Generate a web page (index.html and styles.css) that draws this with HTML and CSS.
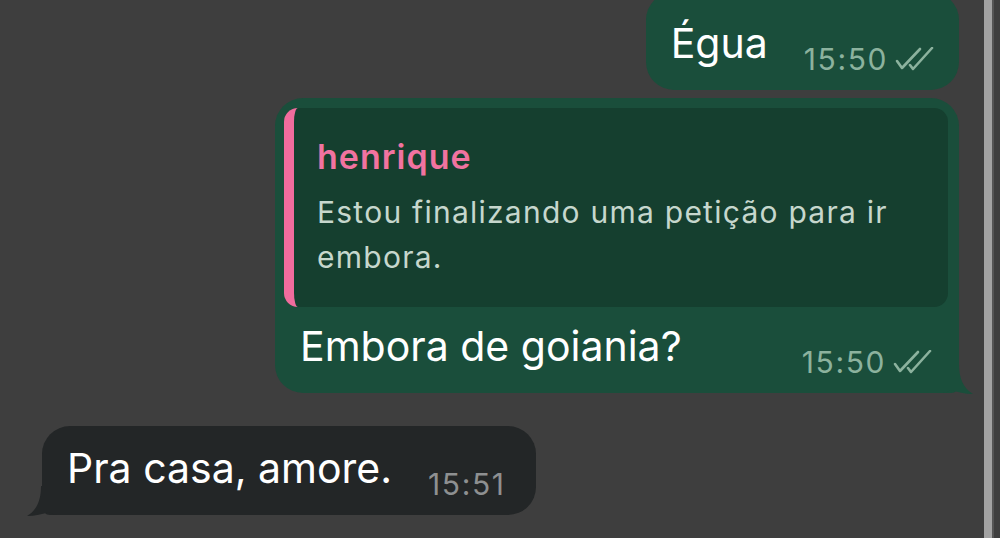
FILE: index.html
```html
<!DOCTYPE html>
<html lang="pt-BR">
<head>
    <meta charset="UTF-8">
    <meta name="viewport" content="width=device-width, initial-scale=1.0">
    <title>Conversa</title>
    <link rel="stylesheet" href="styles.css">
</head>
<body>
    <div class="screen">
        <div class="chat">
            <div class="bubble out first">
                <span class="text">Égua</span>
                <span class="meta">15:50
                    <svg class="ticks" viewBox="0 0 40 24" width="40" height="24">
                        <path d="M2 14 L7 21 L25 2" />
                        <path d="M15 18 L18 22 L37 1" />
                    </svg>
                </span>
            </div>
            <div class="bubble out tail reply">
                <div class="quote">
                    <div class="quote-name">henrique</div>
                    <div class="quote-text">Estou finalizando uma petição para ir embora.</div>
                </div>
                <div class="row">
                    <span class="text">Embora de goiania?</span>
                    <span class="meta">15:50
                        <svg class="ticks" viewBox="0 0 40 24" width="40" height="24">
                            <path d="M2 14 L7 21 L25 2" />
                            <path d="M15 18 L18 22 L37 1" />
                        </svg>
                    </span>
                </div>
            </div>
            <div class="bubble in tail">
                <span class="text">Pra casa, amore.</span>
                <span class="meta">15:51</span>
            </div>
        </div>
        <div class="scrollbar"></div>
    </div>
</body>
</html>
```

FILE: styles.css
```css
html, body {
    margin: 0;
    height: 100%;
}
body {
    background-color: #3e3e3e;
    font-family: Inter, "Noto Sans", sans-serif;
    color: #fff;
    overflow: hidden;
}
.screen {
    display: flex;
    height: 538px;
}
.chat {
    flex: 1;
    display: flex;
    flex-direction: column;
    padding: 0 25px 0 42px;
}
.scrollbar {
    width: 8px;
    margin-right: 6px;
    background-color: #a2a2a2;
    border-right: 2px solid #555;
}

.bubble {
    position: relative;
    box-sizing: border-box;
    max-width: 684px;
    display: flex;
    align-items: flex-end;
    border-radius: 28px;
    padding: 18px 24px 16px 25px;
}
.bubble.out {
    align-self: flex-end;
    background-color: #1a4e3b;
}
.bubble.in {
    align-self: flex-start;
    background-color: #232627;
    margin-top: 33px;
    padding-right: 30px;
}
.bubble.first {
    margin-top: -8px;
    padding-top: 27px;
}
.bubble.reply {
    flex-direction: column;
    align-items: stretch;
    margin-top: 8px;
    padding: 10px 11px 16px 9px;
}

.text {
    font-size: 41px;
    line-height: 48px;
    margin-bottom: 7px;
}
.meta {
    display: flex;
    align-items: center;
    gap: 7px;
    margin-left: 36px;
    font-size: 30px;
    line-height: 30px;
    letter-spacing: 1.6px;
    color: #8cb29e;
    white-space: nowrap;
}
.bubble.in .meta {
    color: #8e9091;
}
.ticks {
    fill: none;
    stroke: #8cb29e;
    stroke-width: 2.6;
    stroke-linecap: round;
    stroke-linejoin: round;
}

.quote {
    background-color: #153f2f;
    border-left: 10px solid #f06c9d;
    border-radius: 14px;
    padding: 29px 24px 27px 23px;
}
.quote-name {
    font-size: 34px;
    line-height: 40px;
    font-weight: 600;
    letter-spacing: 1px;
    color: #f173a0;
}
.quote-text {
    margin-top: 13px;
    font-size: 30px;
    line-height: 45px;
    letter-spacing: 1.25px;
    color: #c6d7cd;
}
.row {
    display: flex;
    align-items: flex-end;
    justify-content: space-between;
    margin-top: 15px;
    padding: 0 15px 0 16px;
}

/* bubble tails */
.bubble.tail::after {
    content: "";
    position: absolute;
    bottom: -1px;
    width: 30px;
    height: 30px;
    background-color: inherit;
}
.bubble.out.tail {
    border-bottom-right-radius: 8px;
}
.bubble.out.tail::after {
    right: -14px;
    clip-path: path("M0 0 H16 C16 14 20 24 30 30 C22 30 14 28 8 26 C5 28 2 29 0 29 Z");
}
.bubble.in.tail {
    border-bottom-left-radius: 8px;
}
.bubble.in.tail::after {
    left: -15px;
    clip-path: path("M30 0 H14 C14 14 10 24 0 30 C8 30 16 28 22 26 C25 28 28 29 30 29 Z");
}
```
